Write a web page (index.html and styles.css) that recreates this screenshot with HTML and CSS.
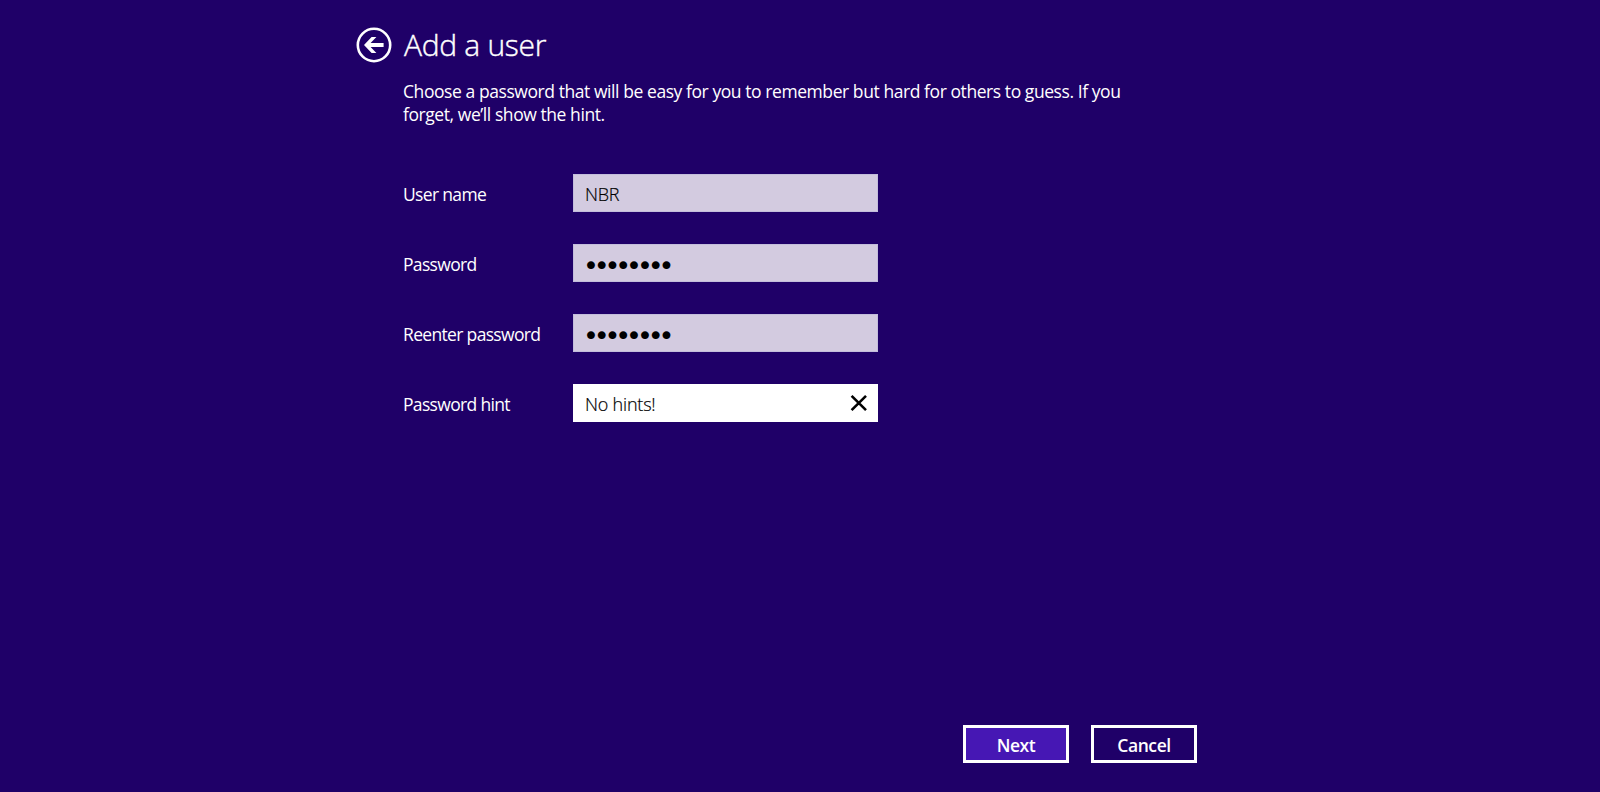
FILE: index.html
```html
<!DOCTYPE html>
<html lang="en">
<head>
	<meta charset="UTF-8">
	<title>Add a user</title>
	<link rel="stylesheet" href="styles.css">
</head>
<body>
<form class="page">
	<header>
		<a class="back" href="#" aria-label="Back">
			<svg width="36" height="36" viewBox="0 0 36 36">
				<circle cx="18" cy="18" r="16.2" fill="none" stroke="#fff" stroke-width="2.6"/>
				<path d="M8 18 L15.6 10 H20.4 L14.6 16.1 H27.6 V19.9 H14.6 L20.4 26 H15.6 Z" fill="#fff"/>
			</svg>
		</a>
		<h1>Add a user</h1>
	</header>
	<p class="intro">Choose a password that will be easy for you to remember but hard for others to guess. If you<br>forget, we’ll show the hint.</p>

	<div class="fields">
		<div class="row">
			<label for="name">User name</label>
			<input id="name" type="text" value="NBR">
		</div>
		<div class="row">
			<label for="pass">Password</label>
			<input id="pass" type="password" value="password">
		</div>
		<div class="row">
			<label for="pass2">Reenter password</label>
			<input id="pass2" type="password" value="password">
		</div>
		<div class="row">
			<label for="hint">Password hint</label>
			<div class="active">
				<input id="hint" type="text" value="No hints!">
				<svg width="18" height="18" viewBox="0 0 18 18">
					<path d="M1.6 1.8 L16 16.2 M16 1.8 L1.6 16.2" stroke="#000" stroke-width="2.6"/>
				</svg>
			</div>
		</div>
	</div>

	<div class="buttons">
		<button class="next" type="button">Next</button>
		<button type="button">Cancel</button>
	</div>
</form>
</body>
</html>
```
FILE: styles.css
```css
* { box-sizing:border-box; }
body { margin:0; background-color:#1f0068; color:#fff; font:17.5px/23px "Open Sans", "Noto Sans", sans-serif; }
.page { display:flex; flex-direction:column; width:841px; height:792px; margin-left:356px; padding:27px 0 29px; }
header { display:flex; align-items:center; gap:12px; height:36px; }
.back { display:block; width:36px; height:36px; }
svg { display:block; }
h1 { margin:0; font-size:30px; line-height:36px; font-weight:300; letter-spacing:-.3px; -webkit-text-stroke:.4px #fff; white-space:nowrap; }
.intro { margin:17px 0 0 47px; letter-spacing:-.43px; white-space:nowrap; }

.fields { display:flex; flex-direction:column; gap:32px; margin:48px 0 0 47px; }
.row { display:flex; align-items:center; height:38px; }
label { width:170px; padding-top:2px; letter-spacing:-.67px; white-space:nowrap; }
input { width:305px; height:38px; margin:0; padding:1px 11px 0; border:1px solid #c3bddb; background-color:#d3cbe0; color:#000; font:300 18px "Open Sans", "Noto Sans", sans-serif; letter-spacing:-.2px; -webkit-text-stroke:.2px #000; outline:none; }
input[type=password] { padding:5px 8px 0 9px; font:27px "DejaVu Sans", sans-serif; letter-spacing:-5.15px; -webkit-text-stroke:0; }
.active { display:flex; align-items:center; width:305px; height:38px; padding-right:10px; background-color:#fff; }
.active input { flex:1; width:0; border-color:#fff; background-color:#fff; }

.buttons { display:flex; justify-content:flex-end; gap:22px; margin-top:auto; }
button { width:106px; height:38px; padding:1px 0 0; border:3px solid #fff; background-color:#1f0068; color:#fff; font:600 17.5px "Open Sans", "Noto Sans", sans-serif; letter-spacing:-.4px; }
.next { background-color:#4617b4; }
```
